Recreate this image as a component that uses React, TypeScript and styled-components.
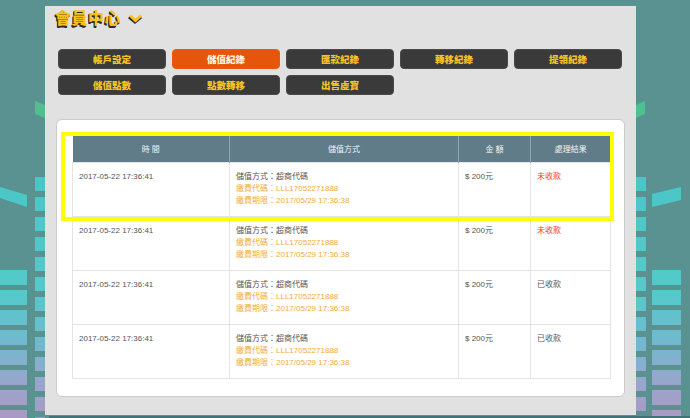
import React from "react";
import styled, { createGlobalStyle } from "styled-components";

const GlobalStyle = createGlobalStyle`
  html, body {
    margin: 0;
    padding: 0;
    height: 100%;
    overflow: hidden;
  }
  body {
    background: #5a9292;
    font-family: "Liberation Sans", "Noto Sans CJK TC", sans-serif;
  }
`;

const Stage = styled.div`
  position: relative;
  width: 690px;
  height: 418px;
  overflow: hidden;
`;

const Backdrop = styled.svg`
  position: absolute;
  left: 0;
  top: 0;
  width: 690px;
  height: 418px;
  z-index: 0;
`;

const Content = styled.div`
  position: relative;
  z-index: 1;
  display: flex;
  flex-direction: column;
  padding-top: 6px;
`;

const Panel = styled.section`
  margin-left: 45px;
  width: 591px;
  background: #e1e1e1;
  padding: 1px 0 18px;
  box-sizing: border-box;
  display: flex;
  flex-direction: column;
`;

const TitleRow = styled.div`
  display: flex;
  align-items: center;
  gap: 6px;
  height: 20px;
  padding-left: 10px;
`;

const Title = styled.h1`
  margin: 0;
  font-family: "Noto Sans CJK TC", sans-serif;
  font-size: 16px;
  line-height: 20px;
  font-weight: 900;
  color: #f7c21c;
  text-shadow: -1px 1px 0 #2b2b2b, -1px 2px 0 #2b2b2b;
  letter-spacing: 0.5px;
`;

const Chevron = styled.svg`
  width: 16px;
  height: 11px;
  margin-top: 3px;
`;

const ButtonGrid = styled.nav`
  margin-top: 22px;
  padding-left: 13px;
  display: grid;
  grid-template-columns: repeat(5, 108px);
  grid-auto-rows: 20px;
  column-gap: 6px;
  row-gap: 6px;
`;

const TabButton = styled.button<{ $active?: boolean }>`
  margin: 0;
  padding: 0;
  box-sizing: border-box;
  height: 20px;
  border-radius: 4px;
  border: 1px solid ${(p) => (p.$active ? "#e85a0e" : "#4a4a4a")};
  background: ${(p) => (p.$active ? "#e5560b" : "#3a3a3a")};
  color: ${(p) => (p.$active ? "#fff4e2" : "#f5c226")};
  font-family: "Noto Sans CJK TC", sans-serif;
  font-size: 9.5px;
  font-weight: 900;
  line-height: 18px;
  text-align: center;
  cursor: pointer;
`;

const Card = styled.div`
  position: relative;
  margin: 24px 0 0 11px;
  width: 569px;
  height: 278px;
  box-sizing: border-box;
  background: #ffffff;
  border: 1px solid #cbcbcb;
  border-radius: 6px;
  padding: 15px 14px 0 15px;
`;

const Highlight = styled.div`
  position: absolute;
  left: 4px;
  top: 12px;
  width: 553px;
  height: 89px;
  box-sizing: border-box;
  border: 4px solid #ffff00;
  pointer-events: none;
`;

const Table = styled.table`
  width: 538px;
  border-collapse: collapse;
  table-layout: fixed;
  font-size: 8px;
  color: #555555;
`;

const HeadCell = styled.th`
  height: 27px;
  padding: 0;
  background: #607c89;
  color: #f1f4f6;
  font-weight: normal;
  font-size: 8px;
  text-align: center;
  border-left: 1px solid #8ea3ad;
  &:first-child {
    border-left: none;
  }
`;

const Cell = styled.td`
  height: 54px;
  box-sizing: border-box;
  padding: 8px 6px 0;
  vertical-align: top;
  border: 1px solid #e4e4e4;
  line-height: 12px;
  white-space: nowrap;
`;

const Line = styled.div<{ $tone?: "normal" | "orange" }>`
  color: ${(p) => (p.$tone === "orange" ? "#f2ab3c" : "#555555")};
`;

const Status = styled.span<{ $paid: boolean }>`
  color: ${(p) => (p.$paid ? "#555555" : "#ff3a1c")};
`;

const Footer = styled.div`
  margin: 1px 0 0 49px;
  height: 6px;
  background: #3f7376;
`;

const tabs = [
  "帳戶設定",
  "儲值紀錄",
  "匯款紀錄",
  "轉移紀錄",
  "提領紀錄",
  "儲值點數",
  "點數轉移",
  "出售虛寶",
];

const rows = [
  { paid: false },
  { paid: false },
  { paid: true },
  { paid: true },
];

function barYs(start: number) {
  const ys: number[] = [];
  for (let y = start; y < 418; y += 20) ys.push(y);
  return ys;
}

function Decoration() {
  return (
    <Backdrop viewBox="0 0 690 418">
      <defs>
        <linearGradient id="eq" gradientUnits="userSpaceOnUse" x1="0" y1="170" x2="0" y2="418">
          <stop offset="0" stopColor="#48c6c6" />
          <stop offset="0.5" stopColor="#56c9c9" />
          <stop offset="0.7" stopColor="#72b8cf" />
          <stop offset="0.85" stopColor="#98a6cc" />
          <stop offset="1" stopColor="#a89ac4" />
        </linearGradient>
      </defs>
      <polygon points="35,101 45,105 45,118 35,114" fill="#4fbf8f" />
      <polygon points="636,105 645,101 645,114 636,118" fill="#4fbf8f" />
      <polygon points="0,187 27,195 27,207 0,198" fill="url(#eq)" />
      <polygon points="652,194 681,187 681,200 652,207" fill="url(#eq)" />
      {barYs(270).map((y) => (
        <rect key={`l${y}`} x={0} y={y} width={27} height={15} fill="url(#eq)" />
      ))}
      {barYs(177).map((y) => (
        <rect key={`lm${y}`} x={35} y={y} width={10} height={14} fill="url(#eq)" />
      ))}
      {barYs(177).map((y) => (
        <rect key={`rm${y}`} x={636} y={y} width={10} height={14} fill="url(#eq)" />
      ))}
      {barYs(270).map((y) => (
        <rect key={`r${y}`} x={652} y={y} width={29} height={15} fill="url(#eq)" />
      ))}
    </Backdrop>
  );
}

export default function App() {
  return (
    <>
      <GlobalStyle />
      <Stage>
        <Decoration />
        <Content>
          <Panel>
            <TitleRow>
              <Title>會員中心</Title>
              <Chevron viewBox="0 0 16 11">
                <polyline points="2,4 8,9 14,4" fill="none" stroke="#2b2b2b" strokeWidth="3" />
                <polyline points="3,2.5 8.5,7.5 14,2.5" fill="none" stroke="#f7c21c" strokeWidth="3" />
              </Chevron>
            </TitleRow>
            <ButtonGrid>
              {tabs.map((t) => (
                <TabButton key={t} $active={t === "儲值紀錄"}>
                  {t}
                </TabButton>
              ))}
            </ButtonGrid>
            <Card>
              <Table>
                <colgroup>
                  <col style={{ width: 157 }} />
                  <col style={{ width: 229 }} />
                  <col style={{ width: 72 }} />
                  <col style={{ width: 80 }} />
                </colgroup>
                <thead>
                  <tr>
                    <HeadCell>時 間</HeadCell>
                    <HeadCell>儲值方式</HeadCell>
                    <HeadCell>金 額</HeadCell>
                    <HeadCell>處理結果</HeadCell>
                  </tr>
                </thead>
                <tbody>
                  {rows.map((r, i) => (
                    <tr key={i}>
                      <Cell>2017-05-22 17:36:41</Cell>
                      <Cell>
                        <Line>儲值方式：超商代碼</Line>
                        <Line $tone="orange">繳費代碼：LLL17052271888</Line>
                        <Line $tone="orange">繳費期限：2017/05/29 17:36:38</Line>
                      </Cell>
                      <Cell>$ 200元</Cell>
                      <Cell>
                        <Status $paid={r.paid}>{r.paid ? "已收款" : "未收款"}</Status>
                      </Cell>
                    </tr>
                  ))}
                </tbody>
              </Table>
              <Highlight />
            </Card>
          </Panel>
          <Footer />
        </Content>
      </Stage>
    </>
  );
}
